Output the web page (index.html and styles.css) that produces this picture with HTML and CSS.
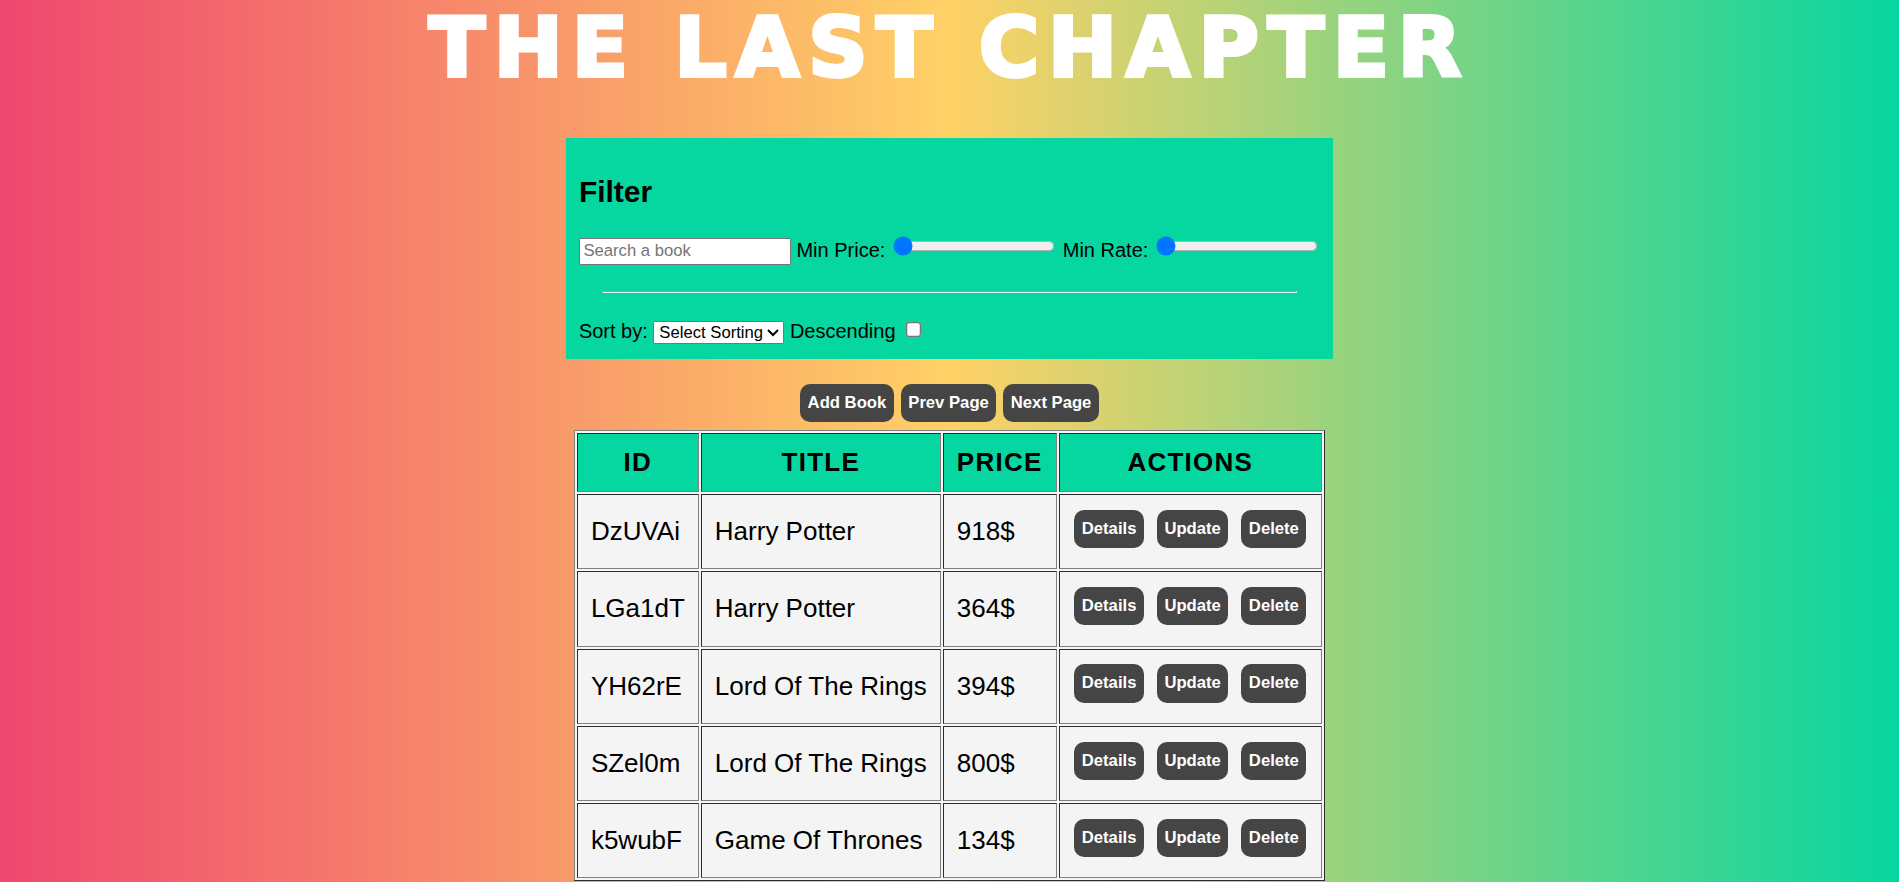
FILE: index.html
```html
<!DOCTYPE html>
<html lang="en">
<head>
<meta charset="utf-8">
<title>The Last Chapter</title>
<link rel="stylesheet" href="styles.css">
</head>
<body>
<div class="app">
  <h1 class="site-title">THE LAST CHAPTER</h1>

  <section class="filter-panel">
    <h2 class="filter-title">Filter</h2>
    <div class="filter-row">
      <input type="text" class="search" placeholder="Search a book">
      <label for="minPrice">Min Price:</label>
      <input type="range" id="minPrice" min="0" max="1000" value="0">
      <label for="minRate">Min Rate:</label>
      <input type="range" id="minRate" min="0" max="5" value="0">
    </div>
    <hr class="divider">
    <div class="sort-row">
      <label for="sortBy">Sort by:</label>
      <select id="sortBy">
        <option>Select Sorting</option>
        <option>Title</option>
        <option>Price</option>
        <option>Rate</option>
      </select>
      <label for="desc">Descending</label>
      <input type="checkbox" id="desc">
    </div>
  </section>

  <div class="toolbar">
    <button class="btn">Add Book</button>
    <button class="btn">Prev Page</button>
    <button class="btn">Next Page</button>
  </div>

  <table class="books">
    <thead>
      <tr><th>ID</th><th>Title</th><th>Price</th><th>Actions</th></tr>
    </thead>
    <tbody>
      <tr>
        <td>DzUVAi</td><td>Harry Potter</td><td>918$</td>
        <td><div class="actions"><button class="btn">Details</button><button class="btn">Update</button><button class="btn">Delete</button></div></td>
      </tr>
      <tr>
        <td>LGa1dT</td><td>Harry Potter</td><td>364$</td>
        <td><div class="actions"><button class="btn">Details</button><button class="btn">Update</button><button class="btn">Delete</button></div></td>
      </tr>
      <tr>
        <td>YH62rE</td><td>Lord Of The Rings</td><td>394$</td>
        <td><div class="actions"><button class="btn">Details</button><button class="btn">Update</button><button class="btn">Delete</button></div></td>
      </tr>
      <tr>
        <td>SZel0m</td><td>Lord Of The Rings</td><td>800$</td>
        <td><div class="actions"><button class="btn">Details</button><button class="btn">Update</button><button class="btn">Delete</button></div></td>
      </tr>
      <tr>
        <td>k5wubF</td><td>Game Of Thrones</td><td>134$</td>
        <td><div class="actions"><button class="btn">Details</button><button class="btn">Update</button><button class="btn">Delete</button></div></td>
      </tr>
    </tbody>
  </table>
</div>
</body>
</html>
```

FILE: styles.css
```css
html {
  min-height: 100%;
  background: linear-gradient(to right, #ef476f 0%, #ffd166 50%, #06d6a0 100%);
}

body {
  margin: 0;
  font-family: "Liberation Sans", Arial, sans-serif;
  color: #000;
}

.app {
  zoom: 1.25;
  font-size: 16px;
}

.site-title {
  margin: 5px 0 0;
  font-family: "DejaVu Sans", "Liberation Sans", sans-serif;
  font-weight: 700;
  font-size: 66px;
  line-height: 66px;
  letter-spacing: 7px;
  text-align: center;
  color: #fff;
  -webkit-text-stroke: 3px #fff;
}

.filter-panel {
  width: fit-content;
  margin: 39px auto 0;
  padding: 10px;
  background: #06d6a0;
}

.filter-title {
  margin: 0.83em 0;
  font-size: 24px;
  font-weight: 700;
}

.filter-row {
  white-space: nowrap;
}

input,
select,
button {
  font-family: "Liberation Sans", Arial, sans-serif;
  font-size: 13.333px;
}

.search {
  box-sizing: border-box;
  width: 169.6px;
}

.divider {
  width: 554px;
  margin: 21px auto 8px;
}

.sort-row {
  margin: 20px 0 2px;
}

.toolbar {
  display: flex;
  justify-content: center;
  gap: 5.6px;
  margin-top: 20px;
}

.btn {
  padding: 7.3px 6px;
  border: none;
  border-radius: 8px;
  background: #454545;
  color: #fff;
  font-weight: 700;
  line-height: normal;
  cursor: pointer;
}

.books {
  margin: 6.4px auto 0;
  border: 1px outset #808080;
  border-spacing: 2px;
  background: #f5f5f5;
  font-size: 20.8px;
}

.books th,
.books td {
  padding: 10.4px;
  border: 1px inset #808080;
}

.books th {
  background: #06d6a0;
  font-weight: 700;
  text-transform: uppercase;
  letter-spacing: 1px;
}

.books td {
  background: #f4f4f4;
}

.actions {
  display: flex;
  justify-content: center;
  gap: 10.4px;
  padding: 1.4px 1.4px 5.8px;
}
```
